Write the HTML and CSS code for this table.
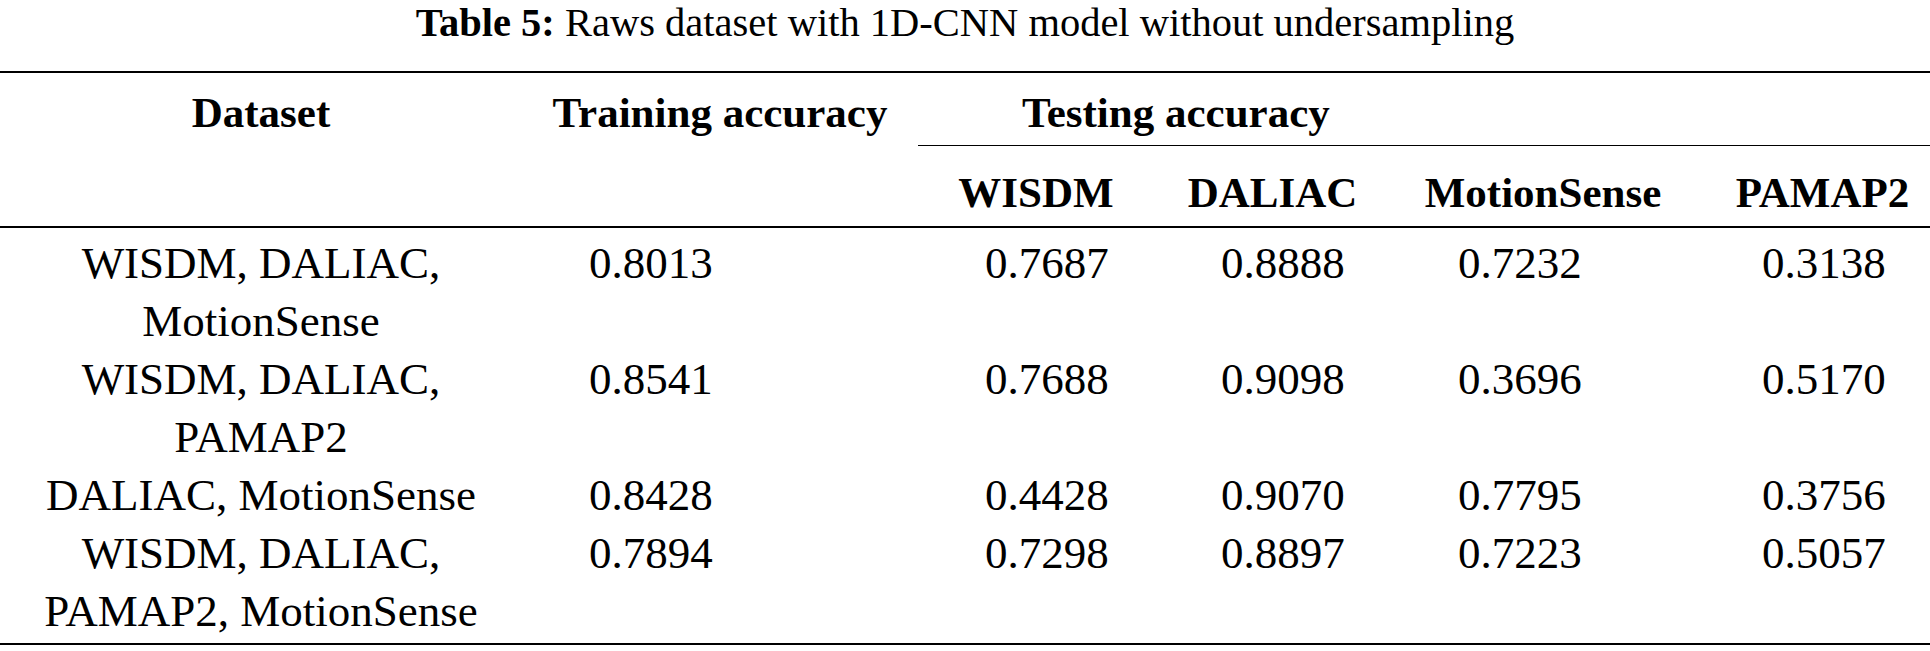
FILE: index.html
```html
<!DOCTYPE html>
<html lang="en">
<head>
<meta charset="utf-8">
<title>Table 5</title>
<link rel="stylesheet" href="styles.css">
</head>
<body>
<p class="caption"><b>Table 5:</b> Raws dataset with 1D-CNN model without undersampling</p>
<table class="results">
  <colgroup>
    <col class="c-dataset">
    <col class="c-train">
    <col class="c-wisdm">
    <col class="c-daliac">
    <col class="c-motion">
    <col class="c-pamap">
  </colgroup>
  <thead>
    <tr>
      <th rowspan="2" class="hd-main">Dataset</th>
      <th rowspan="2" class="hd-main">Training accuracy</th>
      <th colspan="4" class="hd-group">Testing accuracy</th>
    </tr>
    <tr>
      <th class="hd-sub">WISDM</th>
      <th class="hd-sub">DALIAC</th>
      <th class="hd-sub">MotionSense</th>
      <th class="hd-sub">PAMAP2</th>
    </tr>
  </thead>
  <tbody>
    <tr>
      <td class="ds">WISDM, DALIAC,<br>MotionSense</td>
      <td class="num">0.8013</td>
      <td class="num">0.7687</td>
      <td class="num">0.8888</td>
      <td class="num">0.7232</td>
      <td class="num">0.3138</td>
    </tr>
    <tr>
      <td class="ds">WISDM, DALIAC,<br>PAMAP2</td>
      <td class="num">0.8541</td>
      <td class="num">0.7688</td>
      <td class="num">0.9098</td>
      <td class="num">0.3696</td>
      <td class="num">0.5170</td>
    </tr>
    <tr>
      <td class="ds">DALIAC, MotionSense</td>
      <td class="num">0.8428</td>
      <td class="num">0.4428</td>
      <td class="num">0.9070</td>
      <td class="num">0.7795</td>
      <td class="num">0.3756</td>
    </tr>
    <tr>
      <td class="ds">WISDM, DALIAC,<br>PAMAP2, MotionSense</td>
      <td class="num">0.7894</td>
      <td class="num">0.7298</td>
      <td class="num">0.8897</td>
      <td class="num">0.7223</td>
      <td class="num">0.5057</td>
    </tr>
  </tbody>
</table>
</body>
</html>
```
FILE: styles.css
```css
html, body {
  margin: 0;
  padding: 0;
  overflow: hidden;
  background: #ffffff;
}

body {
  font-family: "Liberation Serif", "Times New Roman", serif;
  color: #000000;
}

.caption {
  margin: 0 0 26px;
  text-align: center;
  font-size: 40.5px;
  line-height: 45px;
}

.caption b {
  font-weight: 700;
}

.results {
  width: 1950px;
  table-layout: fixed;
  border-collapse: separate;
  border-spacing: 0;
  border-top: 2px solid #000;
  border-bottom: 2px solid #000;
}

.c-dataset { width: 522px; }
.c-train { width: 396px; }
.c-wisdm { width: 236px; }
.c-daliac { width: 237px; }
.c-motion { width: 304px; }
.c-pamap { width: 255px; }

.results th {
  font-weight: 700;
  font-size: 43px;
  line-height: 43px;
  padding: 0;
  white-space: nowrap;
}

.hd-main {
  vertical-align: top;
  text-align: center;
  padding-top: 18px !important;
  border-bottom: 2px solid #000;
}

.hd-group {
  text-align: left;
  vertical-align: top;
  padding: 18px 0 11px 104px !important;
  border-bottom: 1px solid #000;
}

.hd-sub {
  text-align: center;
  vertical-align: top;
  padding: 25px 0 12px !important;
  border-bottom: 2px solid #000;
}

.results td {
  font-size: 45px;
  line-height: 58px;
  padding: 0;
  vertical-align: top;
  white-space: nowrap;
}

.results tbody tr:first-child td {
  padding-top: 6px;
}

.results tbody tr:last-child td {
  padding-bottom: 3px;
}

.ds {
  text-align: center;
}

.num {
  text-align: left;
  padding-left: 67px !important;
}
```
